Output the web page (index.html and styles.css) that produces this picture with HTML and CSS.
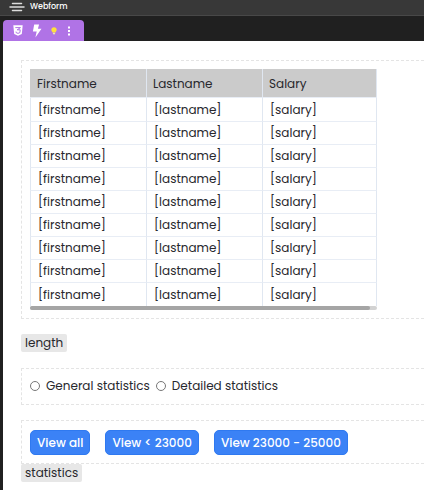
FILE: index.html
```html
<!DOCTYPE html>
<html lang="en">
<head>
<meta charset="utf-8">
<meta name="viewport" content="width=device-width, initial-scale=1">
<title>Webform</title>
<link rel="stylesheet" href="styles.css">
</head>
<body>
<header class="topbar">
  <svg class="menu-icon" width="16" height="10" viewBox="0 0 16 10" aria-hidden="true"><path d="M3.500 1.500h9M1 5h14M3.500 8.500h9"/></svg>
  <span>Webform</span>
</header>
<div class="workspace">
  <nav class="toolbar">
    <button type="button" aria-label="Styles"><svg width="10" height="11" viewBox="0 0 10 11"><path fill="#fff" d="M.3.3h9.400l-.9 8.800L5 10.700 1.200 9.100z"/><path fill="none" stroke="#b073e6" stroke-width="1" d="M2.300 2.600h5.200L4.200 4.800h3l-.3 2.800L5 8.400l-1.900-.8-.1-1"/></svg></button>
    <button type="button" aria-label="Actions"><svg width="10" height="14" viewBox="0 0 10 14"><path fill="#fff" d="M2.200.5h4.900L5.900 4.700h3.600L3.400 13.500l1.300-6H.9z"/></svg></button>
    <button type="button" aria-label="Hints"><svg width="6" height="8" viewBox="0 0 6 8"><path fill="#ffe13b" d="M3 .2a2.700 2.700 0 0 1 2.700 2.600c0 1.100-.9 1.700-1.200 2.800h-3C1.200 4.500.3 3.900.3 2.800A2.700 2.700 0 0 1 3 .2z"/><path fill="#ece5b5" d="M1.900 5.800h2.200v1L3 7.700l-1.100-.9z"/></svg></button>
    <button type="button" aria-label="More"><svg width="4" height="10" viewBox="0 0 4 10"><path fill="#fff" d="M1 .5h2v2H1zM1 4h2v2H1zM1 7.500h2v2H1z"/></svg></button>
  </nav>
  <main class="page">
    <section class="panel table-panel">
      <div class="table-wrap">
        <table>
          <thead><tr><th scope="col">Firstname</th><th scope="col">Lastname</th><th scope="col">Salary</th></tr></thead>
          <tbody>
            <tr><td>[firstname]</td><td>[lastname]</td><td>[salary]</td></tr>
            <tr><td>[firstname]</td><td>[lastname]</td><td>[salary]</td></tr>
            <tr><td>[firstname]</td><td>[lastname]</td><td>[salary]</td></tr>
            <tr><td>[firstname]</td><td>[lastname]</td><td>[salary]</td></tr>
            <tr><td>[firstname]</td><td>[lastname]</td><td>[salary]</td></tr>
            <tr><td>[firstname]</td><td>[lastname]</td><td>[salary]</td></tr>
            <tr><td>[firstname]</td><td>[lastname]</td><td>[salary]</td></tr>
            <tr><td>[firstname]</td><td>[lastname]</td><td>[salary]</td></tr>
            <tr><td>[firstname]</td><td>[lastname]</td><td>[salary]</td></tr>
          </tbody>
        </table>
        <div class="scroll-track"><div class="scroll-thumb"></div></div>
      </div>
    </section>
    <div class="tag tag-length">length</div>
    <section class="panel choices">
      <label><input type="radio" name="stats">General statistics</label>
      <label><input type="radio" name="stats">Detailed statistics</label>
    </section>
    <section class="panel actions">
      <button type="button">View all</button>
      <button type="button">View &lt; 23000</button>
      <button type="button">View 23000 - 25000</button>
    </section>
    <div class="tag">statistics</div>
  </main>
</div>
</body>
</html>
```
FILE: styles.css
```css
* {
  box-sizing: border-box;
}

body {
  margin: 0;
  min-height: 100vh;
  display: flex;
  flex-direction: column;
  background: #202020;
  color: #28282d;
  font: 12px/18px Poppins, Inter, sans-serif;
}

button,
input {
  font: inherit;
  margin: 0;
}

.topbar {
  display: flex;
  align-items: center;
  gap: 5px;
  height: 16px;
  padding: 0 9px 1px;
  background: #383838;
  border-bottom: 1px solid #484848;
  color: #fff;
  font-size: 8px;
  font-weight: 500;
  line-height: 14px;
}

.menu-icon {
  fill: none;
  stroke: #ddd;
  stroke-width: 1.5;
  stroke-linecap: round;
}

.workspace {
  flex: 1;
  display: flex;
  flex-direction: column;
  padding: 4px 0 0 3px;
}

.toolbar {
  align-self: flex-start;
  display: flex;
  align-items: center;
  gap: 9px;
  height: 21px;
  padding: 0 13px 0 10px;
  background: #b073e6;
  border-radius: 4px 4px 0 0;
}

.toolbar button {
  display: flex;
  padding: 0;
  border: 0;
  background: none;
}

.toolbar button:last-child {
  padding-left: 1px;
}

.page {
  flex: 1;
  padding: 19px 0 8px 18px;
  background: #fff;
}

.panel {
  border: 1px dashed #e4e4e4;
  border-right: 0;
  padding: 8px;
}

.table-wrap {
  width: 100%;
  max-width: 347px;
}

table {
  width: 100%;
  table-layout: fixed;
  border-collapse: separate;
  border-spacing: 0;
}

th,
td {
  padding: 0 7px;
  text-align: left;
  font-weight: 400;
  border-right: 1px solid #e0e7f1;
  border-bottom: 1px solid #e8edf5;
}

th {
  height: 29px;
  padding: 2px 6px 0;
  background: #cbcbcb;
}

th:first-child {
  width: 117px;
  padding-left: 7px;
}

th:nth-child(2) {
  width: 116px;
}

td {
  height: 23px;
}

td:first-child {
  border-left: 1px solid #e0e7f1;
}

tbody tr:first-child td {
  height: 24px;
}

tbody tr:last-child td {
  border-bottom: 0;
}

.scroll-track {
  height: 4px;
  border-radius: 2px;
  background: #d2d2d2;
}

.scroll-thumb {
  width: 98%;
  height: 4px;
  border-radius: 2px;
  background: #a5a5a5;
}

.tag {
  width: fit-content;
  padding: 0 4px;
  border-radius: 2px;
  background: #e7e7e7;
}

.tag-length {
  margin: 15px 0 16px;
}

.choices {
  display: flex;
  gap: 6px;
  height: 37px;
  padding-bottom: 10px;
  align-items: center;
}

.choices label {
  display: flex;
  align-items: center;
  white-space: nowrap;
}

.choices input {
  appearance: none;
  width: 10px;
  height: 10px;
  margin-right: 6px;
  border: 1px solid #777;
  border-radius: 50%;
  background: #fff;
}

.actions {
  display: flex;
  gap: 15px;
  margin-top: 15px;
  height: 44px;
  align-items: center;
}

.actions button {
  height: 25px;
  padding: 0 6px;
  border: 1px solid #2f79f0;
  border-radius: 5px;
  background: #3b82f6;
  color: #fff;
  font-weight: 500;
  line-height: 23px;
  white-space: nowrap;
}
```
